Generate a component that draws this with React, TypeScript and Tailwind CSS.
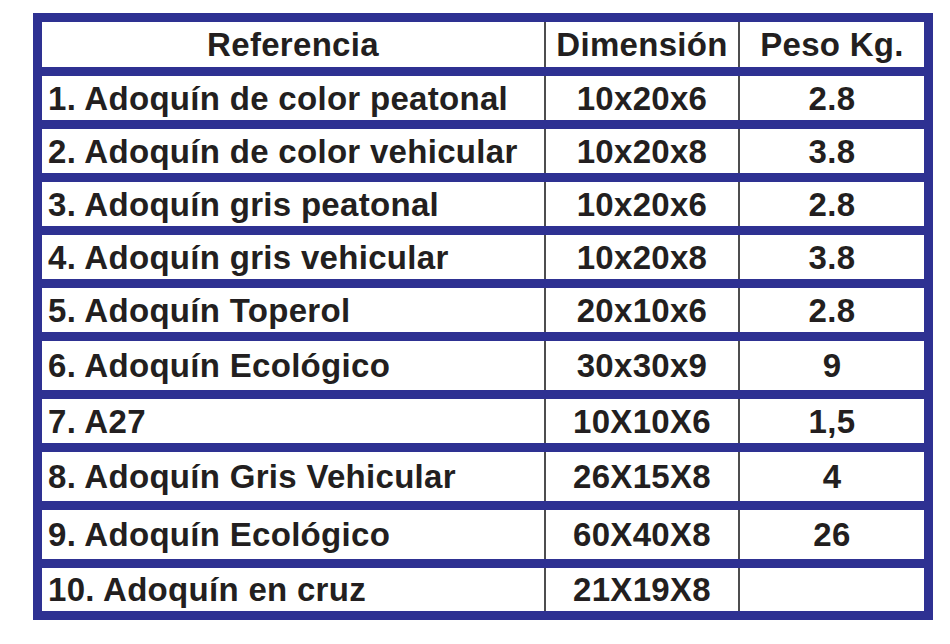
import React from "react";

type Row = { ref: string; dim: string; peso: string; h: string };

const rows: Row[] = [
  { ref: "1. Adoquín de color peatonal", dim: "10x20x6", peso: "2.8", h: "h-[44px]" },
  { ref: "2. Adoquín de color vehicular", dim: "10x20x8", peso: "3.8", h: "h-[44px]" },
  { ref: "3. Adoquín gris peatonal", dim: "10x20x6", peso: "2.8", h: "h-[44px]" },
  { ref: "4. Adoquín gris vehicular", dim: "10x20x8", peso: "3.8", h: "h-[44px]" },
  { ref: "5. Adoquín Toperol", dim: "20x10x6", peso: "2.8", h: "h-[44px]" },
  { ref: "6. Adoquín Ecológico", dim: "30x30x9", peso: "9", h: "h-[49px]" },
  { ref: "7. A27", dim: "10X10X6", peso: "1,5", h: "h-[44px]" },
  { ref: "8. Adoquín Gris Vehicular", dim: "26X15X8", peso: "4", h: "h-[49px]" },
  { ref: "9. Adoquín Ecológico", dim: "60X40X8", peso: "26", h: "h-[49px]" },
  { ref: "10. Adoquín en cruz", dim: "21X19X8", peso: "", h: "h-[43px]" },
];

function TableRow({ a, b, c, h, header }: { a: string; b: string; c: string; h: string; header?: boolean }) {
  return (
    <div className={`grid grid-cols-[502px_194px_186px] bg-white ${h}`}>
      <div className={`flex items-center ${header ? "justify-center" : "pl-[6px]"}`}>{a}</div>
      <div className="flex items-center justify-center border-l-2 border-[#4d4d4f]">{b}</div>
      <div className="flex items-center justify-center border-l-2 border-[#4d4d4f]">{c}</div>
    </div>
  );
}

export default function App() {
  return (
    <div className="w-[950px] h-[644px] bg-white pt-[13px] pl-[33px]">
      <div
        className="w-[900px] border-[9px] border-[#2e3192] bg-[#2e3192] flex flex-col gap-[9px] text-[33px] font-bold leading-none tracking-[0.3px] text-[#231f20] whitespace-nowrap"
        style={{ fontFamily: '"Liberation Sans", Arial, sans-serif' }}
      >
        <TableRow a="Referencia" b="Dimensión" c="Peso Kg." h="h-[45px]" header />
        {rows.map((r) => (
          <TableRow key={r.ref} a={r.ref} b={r.dim} c={r.peso} h={r.h} />
        ))}
      </div>
    </div>
  );
}
